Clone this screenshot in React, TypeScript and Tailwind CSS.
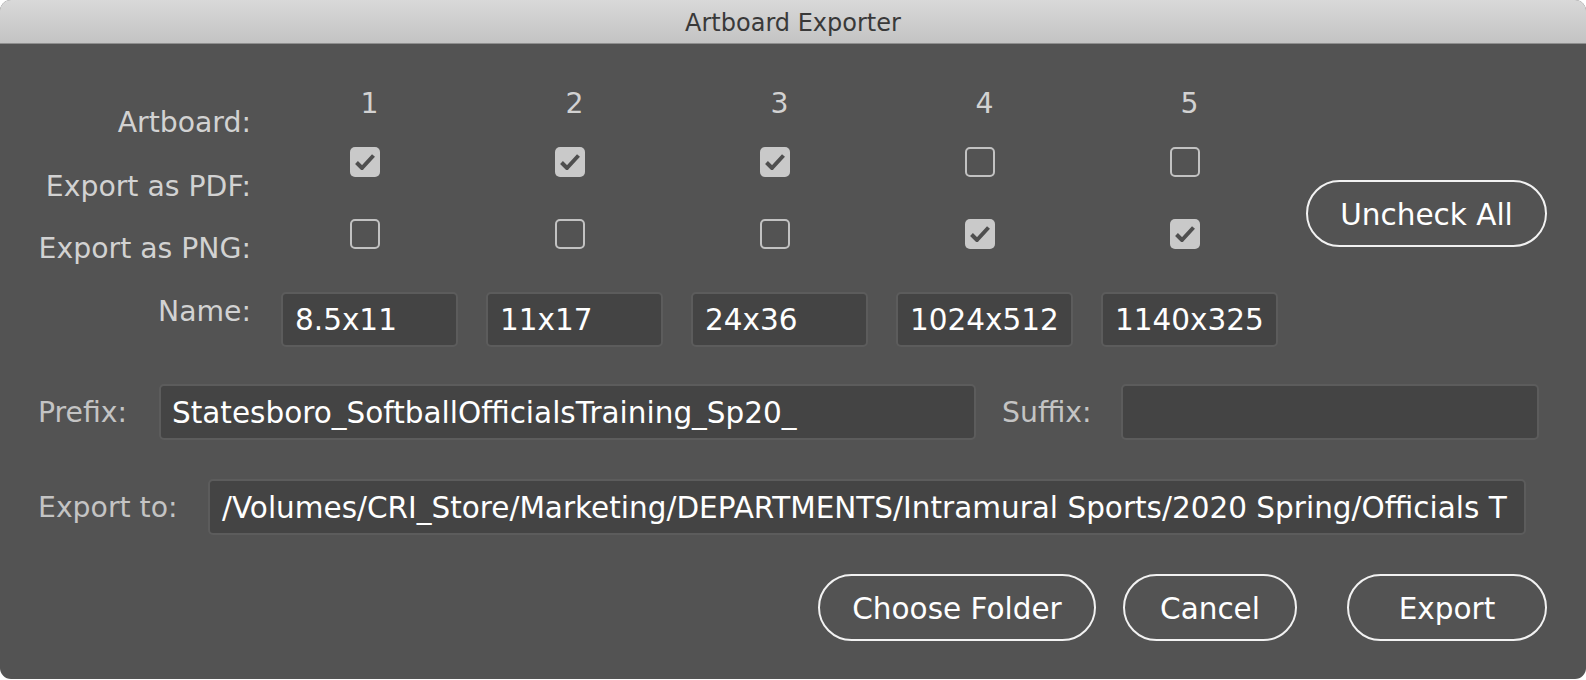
import React from "react";

const font = { fontFamily: '"DejaVu Sans", "Noto Sans", sans-serif' };

type Col = { n: number; pdf: boolean; png: boolean; name: string };

const cols: Col[] = [
  { n: 1, pdf: true, png: false, name: "8.5x11" },
  { n: 2, pdf: true, png: false, name: "11x17" },
  { n: 3, pdf: true, png: false, name: "24x36" },
  { n: 4, pdf: false, png: true, name: "1024x512" },
  { n: 5, pdf: false, png: true, name: "1140x325" },
];

const Checkbox = ({ checked }: { checked: boolean }) =>
  checked ? (
    <div className="w-[30px] h-[30px] rounded-[5px] bg-[#c9c9c9] flex items-center justify-center">
      <svg width="30" height="30" viewBox="0 0 30 30">
        <path
          d="M6.5 15.5 L12 21 L23.5 8.5"
          fill="none"
          stroke="#4f4f4f"
          strokeWidth="4"
          strokeLinejoin="round"
        />
      </svg>
    </div>
  ) : (
    <div className="w-[30px] h-[30px] rounded-[5px] border-2 border-[#c2c2c2]" />
  );

const PillButton = ({ label, width }: { label: string; width: string }) => (
  <button
    className={`${width} h-[67px] pt-[4px] rounded-full border-2 border-[#f2f2f2] text-white text-[29.5px] leading-none flex items-center justify-center`}
  >
    {label}
  </button>
);

export default function App() {
  return (
    <div className="bg-white w-[1586px] h-[680px]" style={font}>
      <div className="w-[1586px] h-[679px] rounded-[11px] overflow-hidden bg-[#535353] flex flex-col">
        {/* Title bar */}
        <div className="h-[44px] shrink-0 pt-[3px] bg-gradient-to-b from-[#d9d9d9] to-[#c3c3c3] border-b border-[#8e8e8e] flex items-center justify-center">
          <span className="text-[24px] text-[#393939] leading-none">Artboard Exporter</span>
        </div>

        {/* Artboard grid */}
        <div className="flex pt-[41px]">
          <div className="w-[251px] shrink-0 flex flex-col items-end text-[28.3px] leading-[34px] text-[#d2d2d2]">
            <div className="mt-[21px]">Artboard:</div>
            <div className="mt-[30px]">Export as PDF:</div>
            <div className="mt-[28px]">Export as PNG:</div>
            <div className="mt-[29px]">Name:</div>
          </div>

          <div className="ml-[30px] flex gap-[28px]">
            {cols.map((c) => (
              <div key={c.n} className="w-[177px] flex flex-col items-center">
                <div className="mt-[2px] text-[28.3px] leading-[34px] text-[#d2d2d2]">{c.n}</div>
                <div className="mt-[26px] w-full flex justify-center pr-[9px]">
                  <Checkbox checked={c.pdf} />
                </div>
                <div className="mt-[42px] w-full flex justify-center pr-[9px]">
                  <Checkbox checked={c.png} />
                </div>
                <div className="mt-[43px] w-full h-[55px] rounded-[5px] bg-[#444444] border-2 border-[#5c5c5c] px-[12px] pt-[2px] flex items-center text-[29.5px] text-white">
                  {c.name}
                </div>
              </div>
            ))}
          </div>

          <div className="ml-[28px] pt-[95px]">
            <PillButton label="Uncheck All" width="w-[241px]" />
          </div>
        </div>

        {/* Prefix / Suffix */}
        <div className="flex items-center mt-[37px] pl-[38px]">
          <span className="w-[121px] pt-[3px] text-[28.3px] text-[#c4c4c4]">Prefix:</span>
          <div className="w-[817px] h-[56px] rounded-[5px] bg-[#444444] border-2 border-[#5c5c5c] px-[11px] pt-[3px] flex items-center text-[29.5px] text-white">
            Statesboro_SoftballOfficialsTraining_Sp20_
          </div>
          <span className="ml-[26px] w-[119px] pt-[3px] text-[28.3px] text-[#c4c4c4]">Suffix:</span>
          <div className="w-[418px] h-[56px] rounded-[5px] bg-[#444444] border-2 border-[#5c5c5c]" />
        </div>

        {/* Export to */}
        <div className="flex items-center mt-[39px] pl-[38px]">
          <span className="w-[170px] pt-[3px] text-[28.3px] text-[#c4c4c4]">Export to:</span>
          <div className="w-[1318px] h-[56px] rounded-[5px] bg-[#444444] border-2 border-[#5c5c5c] px-[12px] pt-[3px] flex items-center text-[29.5px] text-white whitespace-nowrap overflow-hidden">
            /Volumes/CRI_Store/Marketing/DEPARTMENTS/Intramural Sports/2020 Spring/Officials T
          </div>
        </div>

        {/* Actions */}
        <div className="flex justify-end mt-[39px] pr-[39px]">
          <PillButton label="Choose Folder" width="w-[278px]" />
          <div className="ml-[27px]">
            <PillButton label="Cancel" width="w-[174px]" />
          </div>
          <div className="ml-[50px]">
            <PillButton label="Export" width="w-[200px]" />
          </div>
        </div>
      </div>
    </div>
  );
}
